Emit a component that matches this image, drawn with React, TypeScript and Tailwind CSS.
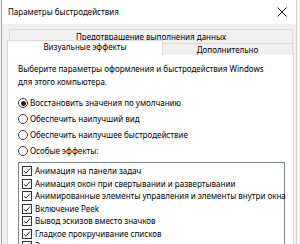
import React from "react";

const items = [
  "Анимация на панели задач",
  "Анимация окон при свертывании и развертывании",
  "Анимированные элементы управления и элементы внутри окна",
  "Включение Peek",
  "Вывод эскизов вместо значков",
  "Гладкое прокручивание списков",
  "Затухание меню после вызова команды",
];

const radios = [
  { label: "Восстановить значения по умолчанию", checked: true },
  { label: "Обеспечить наилучший вид", checked: false },
  { label: "Обеспечить наилучшее быстродействие", checked: false },
  { label: "Особые эффекты:", checked: false },
];

function Radio({ checked }: { checked: boolean }) {
  return (
    <span className="w-[10px] h-[10px] rounded-full border border-[#333] bg-white flex items-center justify-center shrink-0">
      {checked && <span className="w-[5px] h-[5px] rounded-full bg-[#222]" />}
    </span>
  );
}

function Check() {
  return (
    <span className="w-[10px] h-[10px] border border-[#333] bg-white flex items-center justify-center shrink-0">
      <svg width="8" height="8" viewBox="0 0 8 8">
        <path d="M1 4.2 L3 6.2 L7 1.5" fill="none" stroke="#222" strokeWidth="1" />
      </svg>
    </span>
  );
}

export default function App() {
  return (
    <div
      className="w-[300px] h-[244px] overflow-hidden bg-[#f7f7f7] flex text-black"
      style={{ fontFamily: '"Noto Sans", "Open Sans", sans-serif' }}
    >
      <div className="w-[1px] bg-[#a0a0a0] ml-[1px] shrink-0" />
      <div className="w-[295px] flex flex-col shrink-0 bg-[#f0f0f0] border-r border-[#d0d0d0]">
        <div className="h-[24px] bg-white flex items-center pl-[6px] pr-[9px] shrink-0">
          <span className="text-[8px] leading-none flex-1">Параметры быстродействия</span>
          <svg width="10" height="10" viewBox="0 0 10 10">
            <path d="M0.5 0.5 L9.5 9.5 M9.5 0.5 L0.5 9.5" stroke="#111" strokeWidth="1" />
          </svg>
        </div>
        <div className="pl-[5px] pr-[2px] pt-[5px] flex flex-col flex-1">
          <div className="ml-[2px] mr-[1px] h-[14px] border border-b-0 border-[#d9d9d9] bg-[#f0f0f0] flex items-center justify-center text-[8px] leading-none">
            Предотвращение выполнения данных
          </div>
          <div className="h-[12px] flex items-end relative z-10 -mb-px">
            <div className="w-[156px] h-[15px] bg-white border border-b-0 border-[#d9d9d9] flex items-center justify-center text-[8px] leading-none pb-[2px]">
              Визуальные эффекты
            </div>
            <div className="flex-1 h-[12px] mr-[1px] bg-[#f0f0f0] border border-l-0 border-b-0 border-[#d9d9d9] flex items-center justify-center text-[8px] leading-none">
              Дополнительно
            </div>
          </div>
          <div className="flex-1 bg-white border border-[#d9d9d9] pl-[10px] pt-[7px]">
            <div className="text-[8px] leading-[13px]">
              Выберите параметры оформления и быстродействия Windows
              <br />
              для этого компьютера.
            </div>
            <div className="mt-[7px] flex flex-col">
              {radios.map((r) => (
                <div key={r.label} className="h-[16px] flex items-center gap-[2px] text-[8px] leading-none">
                  <Radio checked={r.checked} />
                  <span>{r.label}</span>
                </div>
              ))}
            </div>
            <div className="mt-[3px] w-[267px] h-[120px] border border-[#828790] pt-[2px] pl-[3px]">
              <div className="-mr-[5px] overflow-hidden">
                {items.map((t) => (
                  <div key={t} className="h-[12.5px] flex items-center gap-[3px] text-[8px] leading-none whitespace-nowrap">
                    <Check />
                    <span>{t}</span>
                  </div>
                ))}
              </div>
            </div>
          </div>
        </div>
      </div>
    </div>
  );
}
